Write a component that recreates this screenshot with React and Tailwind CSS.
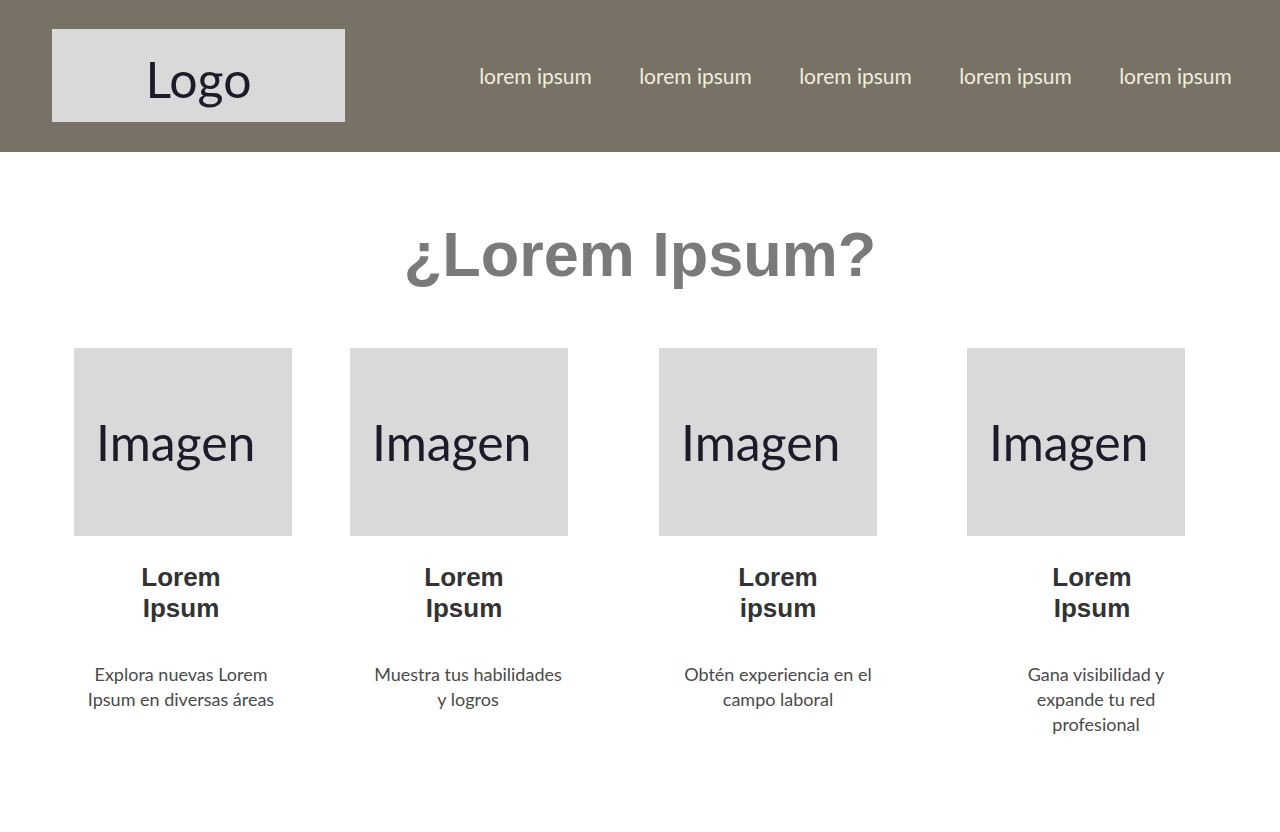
import React from 'react';

const navItems = ['lorem ipsum', 'lorem ipsum', 'lorem ipsum', 'lorem ipsum', 'lorem ipsum'];

const cards = [
  { title: ['Lorem', 'Ipsum'], text: ['Explora nuevas Lorem', 'Ipsum en diversas áreas'], img: 'ml-[21px]', col: 'ml-[53px]', desc: '' },
  { title: ['Lorem', 'Ipsum'], text: ['Muestra tus habilidades', 'y logros'], img: 'ml-[14px]', col: 'ml-[27px]', desc: 'pl-2' },
  { title: ['Lorem', 'ipsum'], text: ['Obtén experiencia en el', 'campo laboral'], img: 'ml-[9px]', col: 'ml-[58px]', desc: '' },
  { title: ['Lorem', 'Ipsum'], text: ['Gana visibilidad y', 'expande tu red', 'profesional'], img: 'ml-[3px]', col: 'ml-[58px]', desc: 'pl-2' },
];

const rounded = { fontFamily: 'Lato, "Open Sans", sans-serif' };
const arial = { fontFamily: '"Liberation Sans", Arial, sans-serif' };

const Card = ({ card }) => (
  <div className={`w-[256px] shrink-0 flex flex-col ${card.col}`}>
    {/* image placeholder */}
    <div
      className={`w-[218px] h-[188px] bg-[#d9d9d9] flex items-center pl-[22px] ${card.img}`}
    >
      <span className="text-[50px] leading-none text-[#1c1b29]" style={rounded}>
        Imagen
      </span>
    </div>
    <h3
      className="mt-[26px] text-center text-[26px] leading-[31px] font-bold text-[#333333]"
      style={arial}
    >
      {card.title[0]}
      <br />
      {card.title[1]}
    </h3>
    <p
      className={`mt-[38px] text-center text-[18px] leading-[25px] text-[#4a4a4a] whitespace-nowrap ${card.desc}`}
      style={rounded}
    >
      {card.text.map((line, i) => (
        <React.Fragment key={i}>
          {line}
          {i < card.text.length - 1 && <br />}
        </React.Fragment>
      ))}
    </p>
  </div>
);

const App = () => {
  return (
    <div className="w-[1280px] min-h-[832px] bg-white">
      {/* Header */}
      <header className="h-[152px] bg-[#787266] flex justify-between pl-[52px] pr-[48px]">
        <div className="mt-[29px] w-[293px] h-[93px] bg-[#d9d9d9] flex items-center justify-center pt-[6px]">
          <span className="text-[50px] leading-none text-[#1c1b29]" style={rounded}>
            Logo
          </span>
        </div>
        <nav className="flex items-center gap-[47px]">
          {navItems.map((item, i) => (
            <a
              key={i}
              href="#"
              className="w-[113px] text-center text-[21px] text-[#f1ebdd] whitespace-nowrap"
              style={rounded}
            >
              {item}
            </a>
          ))}
        </nav>
      </header>

      {/* Main */}
      <main className="flex flex-col">
        <h1
          className="mt-[71px] text-center text-[63px] leading-[63px] font-bold text-[#7a7a7a]"
          style={arial}
        >
          ¿Lorem Ipsum?
        </h1>
        <div className="mt-[62px] flex">
          {cards.map((card, i) => (
            <Card key={i} card={card} />
          ))}
        </div>
      </main>
    </div>
  );
};

export default App;
